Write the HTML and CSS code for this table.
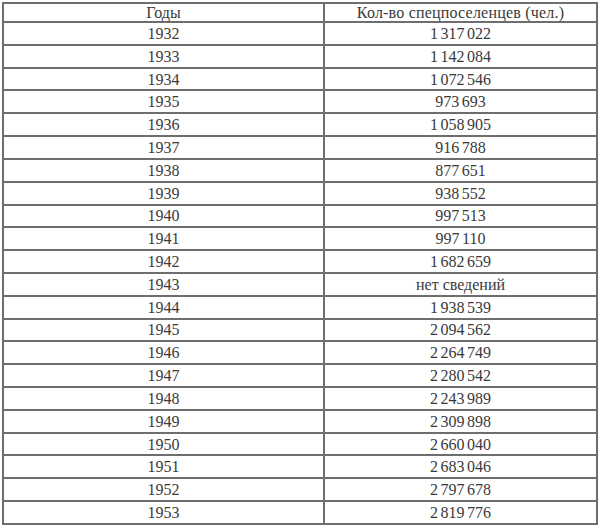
FILE: index.html
```html
<!DOCTYPE html>
<html lang="ru">
<head>
<meta charset="utf-8">
<link rel="stylesheet" href="styles.css">
</head>
<body>
<table class="data">
<thead>
<tr><th class="year">Годы</th><th class="count">Кол-во спецпоселенцев (чел.)</th></tr>
</thead>
<tbody>
<tr><td>1932</td><td>1 317 022</td></tr>
<tr><td>1933</td><td>1 142 084</td></tr>
<tr><td>1934</td><td>1 072 546</td></tr>
<tr><td>1935</td><td>973 693</td></tr>
<tr><td>1936</td><td>1 058 905</td></tr>
<tr><td>1937</td><td>916 788</td></tr>
<tr><td>1938</td><td>877 651</td></tr>
<tr><td>1939</td><td>938 552</td></tr>
<tr><td>1940</td><td>997 513</td></tr>
<tr><td>1941</td><td>997 110</td></tr>
<tr><td>1942</td><td>1 682 659</td></tr>
<tr><td>1943</td><td class="na">нет сведений</td></tr>
<tr><td>1944</td><td>1 938 539</td></tr>
<tr><td>1945</td><td>2 094 562</td></tr>
<tr><td>1946</td><td>2 264 749</td></tr>
<tr><td>1947</td><td>2 280 542</td></tr>
<tr><td>1948</td><td>2 243 989</td></tr>
<tr><td>1949</td><td>2 309 898</td></tr>
<tr><td>1950</td><td>2 660 040</td></tr>
<tr><td>1951</td><td>2 683 046</td></tr>
<tr><td>1952</td><td>2 797 678</td></tr>
<tr><td>1953</td><td>2 819 776</td></tr>
</tbody>
</table>
</body>
</html>
```
FILE: styles.css
```css
html, body {
  margin: 0;
  padding: 0;
  background: #ffffff;
}
body {
  padding: 2px 2px 0 2px;
  font-family: "Liberation Serif", "Times New Roman", serif;
  font-size: 16px;
  color: #3a3a3a;
}
.data {
  border-collapse: collapse;
  width: 596px;
  height: 523px;
  table-layout: fixed;
}
.data th, .data td {
  border: 2px solid #6e6e6e;
  text-align: center;
  font-weight: normal;
  padding: 1px 0 0 0;
  line-height: 1;
  vertical-align: middle;
}
.data td {
  word-spacing: -1.5px;
}
.data td.na {
  word-spacing: 0;
}
.data th.count {
  letter-spacing: 0.2px;
}
.data .year {
  width: 319px;
}
```
